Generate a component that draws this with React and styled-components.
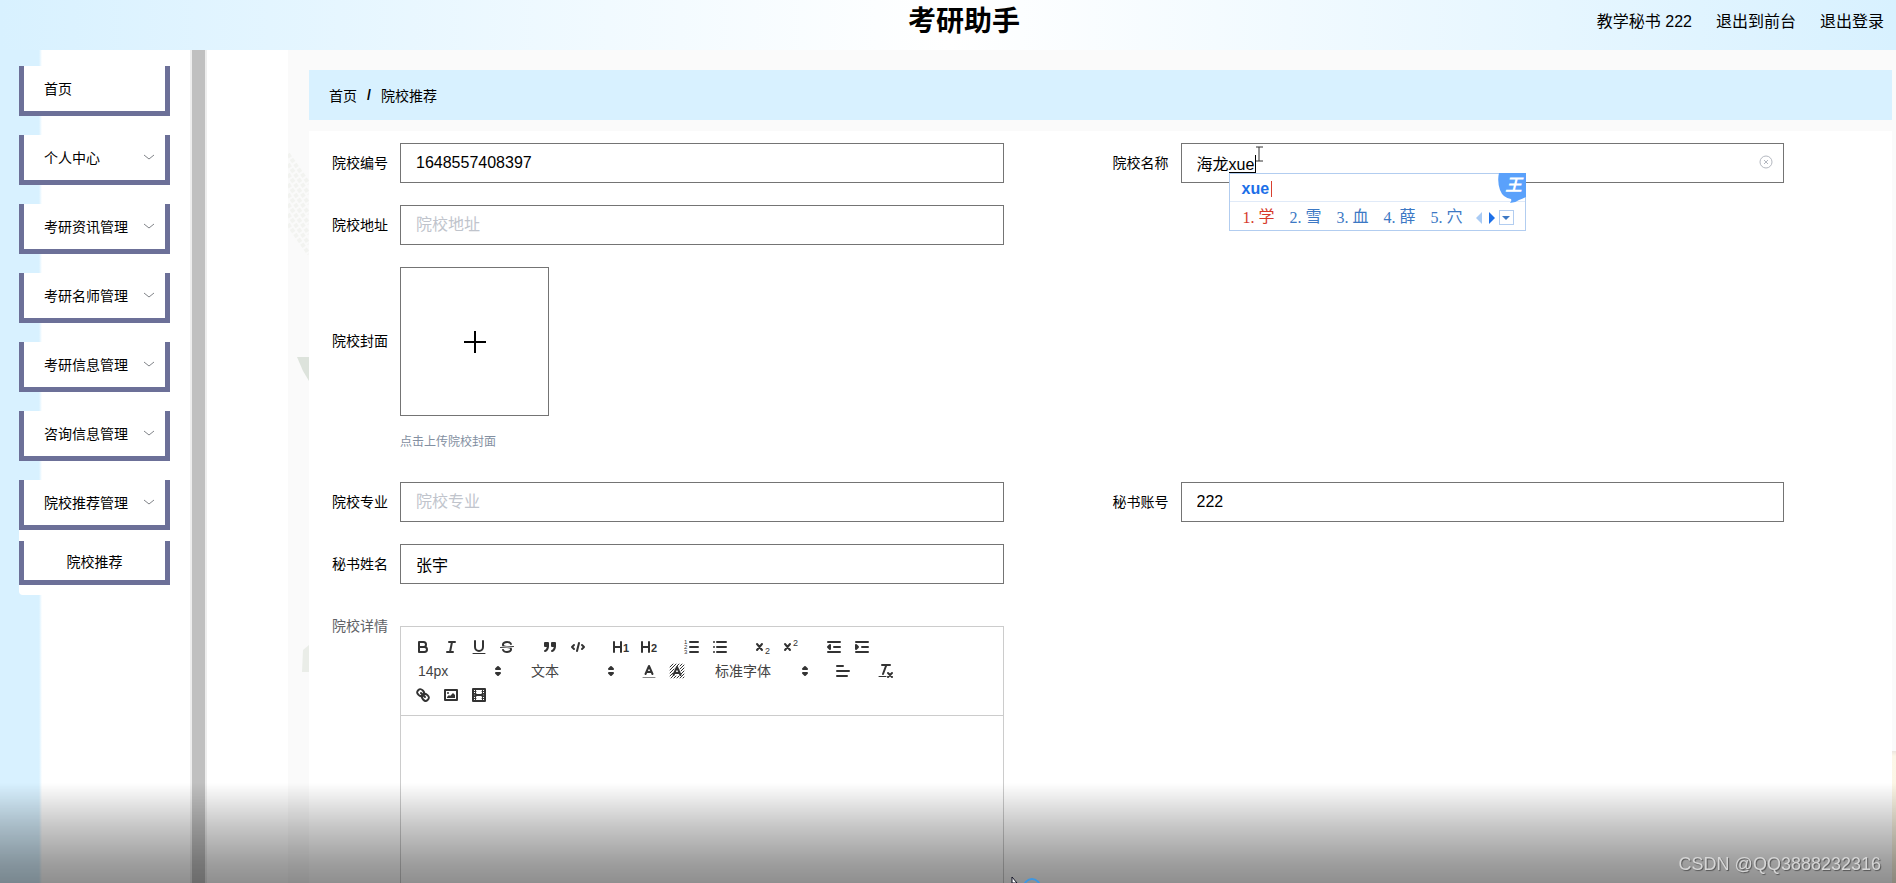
import React, { useState } from "react";
import styled, { createGlobalStyle } from "styled-components";

const GlobalStyle = createGlobalStyle`
  * {
    box-sizing: border-box;
  }

  body {
    margin: 0;
    overflow: hidden;
    background: #fff;
    color: #000;
    font-family: "Liberation Sans", "Noto Sans CJK SC", sans-serif;
    font-size: 14px;
  }

  button, input, select {
    margin: 0;
    font-family: inherit;
  }

  a {
    color: inherit;
    text-decoration: none;
  }
`;

const Page = styled.div`
  display: flex;
  flex-direction: column;
  height: 100vh;
  overflow: hidden;
`;

const Header = styled.header`
  display: grid;
  grid-template-columns: 1fr auto 1fr;
  flex: none;
  height: 50px;
  padding: 0 12px 6px 44px;
  align-items: center;
  background: linear-gradient(90deg, #d8f1ff, #fff 50%, #d8f1ff);
`;

const Title = styled.h1`
  grid-column: 2;
  margin: 0;
  font-size: 28px;
  line-height: 40px;
`;

const UserNav = styled.nav`
  display: flex;
  justify-content: flex-end;
  gap: 24px;
  font-size: 16px;
  line-height: 24px;
`;

const Body = styled.div`
  display: flex;
  flex: 1;
  min-height: 0;
`;

const Sidebar = styled.aside`
  flex: none;
  width: 190px;
  padding: 16px 20px 0 19px;
  background: linear-gradient(90deg, #d8f1ff 39px, #fff 42px);
`;

const Menu = styled.ul`
  display: flex;
  flex-direction: column;
  gap: 19px;
  margin: 0;
  padding: 0;
  list-style: none;
`;

const MenuItem = styled.button`
  display: flex;
  width: 100%;
  height: 50px;
  padding: 0 10px 2px 20px;
  align-items: center;
  justify-content: space-between;
  border: 5px solid #6c7098;
  border-top: 0;
  background: #fff;
  color: #000;
  font-size: 14px;
`;

const SubMenu = styled.div`
  padding: 11px 0 10px;
  border-radius: 0 0 4px 4px;
  background: #fff;
`;

const SubMenuItem = styled(MenuItem)`
  height: 44px;
  padding: 0;
  justify-content: center;
`;

const Divider = styled.div`
  flex: none;
  width: 17px;
  border: solid #eee;
  border-width: 0 2px;
  background: #c0c0c0;
`;

const Main = styled.main`
  display: grid;
  flex: 1;
  grid-template-columns: 21px 1fr 4px;
  min-width: 0;
  margin-left: 81px;
  background: #fafafa;
`;

const Gutter = styled.svg`
  display: block;
  width: 100%;
  height: 834px;
`;

const Edge = styled.div`
  background: linear-gradient(#fafafa 701px, #ebe6e0 701px, #fcf7e8 706px, #f5ecd2);
`;

const Content = styled.div`
  display: flex;
  flex-direction: column;
  min-width: 0;
  padding-top: 20px;
`;

const Breadcrumb = styled.nav`
  display: flex;
  flex: none;
  height: 50px;
  padding-left: 20px;
  gap: 10px;
  align-items: center;
  background: #d8f1ff;
`;

const Card = styled.form`
  display: flex;
  flex: 1;
  flex-direction: column;
  gap: 22px;
  margin-top: 11px;
  padding: 12px 11px 0;
  background: #fff;
`;

const Row = styled.div`
  display: grid;
  grid-template-columns: 1fr 1fr;
`;

const Field = styled.div`
  display: grid;
  grid-template-columns: 80px 1fr;
  padding-right: 97px;
`;

const Label = styled.label`
  height: ${(p) => (p.$tall ? "148px" : "40px")};
  padding-right: 12px;
  line-height: ${(p) => (p.$tall ? "148px" : "40px")};
  text-align: right;
  color: ${(p) => (p.$muted ? "#606266" : "#000")};
`;

const Control = styled.div`
  position: relative;
  min-width: 0;
`;

const TextInput = styled.input`
  display: block;
  width: 100%;
  height: 40px;
  padding: 0 15px;
  border: 1px solid #747474;
  border-radius: 0;
  outline: 0;
  background: #fff;
  color: #000;
  font-size: 16px;

  &::placeholder {
    color: #c0c4cc;
  }
`;

const ClearButton = styled.button`
  position: absolute;
  top: 11px;
  right: 10px;
  width: 16px;
  height: 16px;
  padding: 0;
  border: 0;
  background: none;

  svg {
    display: block;
  }
`;

const Composing = styled.span`
  position: absolute;
  top: 12px;
  left: 48px;
  width: 27px;
  height: 18px;
  border-right: 1px solid #000;
  border-bottom: 1px solid #000;
`;

const Pointer = styled.svg`
  position: absolute;
  top: 3px;
  left: 74px;
`;

const Ime = styled.div`
  position: absolute;
  z-index: 2;
  top: 30px;
  left: 48px;
  width: 297px;
  height: 58px;
  border: 1px solid #b2cdf0;
  background: #fff;
`;

const ImeText = styled.div`
  display: flex;
  height: 28px;
  padding: 2px 0 0 12px;
  align-items: center;
  border-bottom: 1px solid #e0eaf8;
  color: #1c6fe8;
  font-size: 16px;
  font-weight: bold;

  &::after {
    content: "";
    width: 1px;
    height: 16px;
    margin-left: 2px;
    background: #d8402f;
  }
`;

const ImeLogo = styled.svg`
  position: absolute;
  top: -1px;
  right: -1px;
`;

const Candidates = styled.div`
  display: flex;
  height: 29px;
  padding: 2px 0 0 13px;
  align-items: center;
`;

const Candidate = styled.button`
  display: flex;
  flex: none;
  width: ${(p) => (p.$last ? "42px" : "47px")};
  padding: 0;
  border: 0;
  background: none;
  color: ${(p) => (p.$active ? "#d63a2a" : "#3c78c4")};
  font-family: "Liberation Mono", "Noto Sans CJK SC", monospace;
  font-size: 16px;
  line-height: 24px;

  span {
    width: 16px;
    font-family: "Liberation Serif", serif;
    text-align: left;
  }
`;

const Pager = styled.button`
  width: ${(p) => (p.$boxed ? "15px" : "13px")};
  height: 15px;
  padding: 0;
  border: ${(p) => (p.$boxed ? "1px solid #b2cdf0" : "0")};
  background: none;

  svg {
    display: block;
    margin: 0 auto;
  }
`;

const Upload = styled.button`
  display: flex;
  width: 149px;
  height: 149px;
  padding: 0;
  align-items: center;
  justify-content: center;
  border: 1px solid #747474;
  background: #fff;
`;

const Tip = styled.div`
  margin-top: 8px;
  color: #838fa1;
  font-size: 12px;
  line-height: 36px;
`;

const Editor = styled.div`
  height: 400px;
  margin-top: 20px;
  border: 1px solid #ccc;
`;

const Toolbar = styled.div`
  padding: 8px;
  border-bottom: 1px solid #ccc;
`;

const ToolLine = styled.div`
  display: flex;
  height: 24px;
  gap: 15px;
`;

const Group = styled.div`
  display: flex;
`;

const Tool = styled.button`
  width: 28px;
  height: 24px;
  padding: 3px 5px;
  border: 0;
  background: none;
  color: #333;

  svg {
    display: block;
  }
`;

const Picker = styled.div`
  display: grid;
  width: ${(p) => p.$width};
  align-items: center;

  select {
    grid-area: 1 / 1;
    width: 100%;
    height: 24px;
    padding: 0 18px 0 9px;
    appearance: none;
    border: 0;
    background: none;
    color: #444;
    font-size: 14px;
  }

  svg {
    grid-area: 1 / 1;
    justify-self: end;
    color: #333;
    pointer-events: none;
  }
`;

const Shade = styled.div`
  position: fixed;
  z-index: 5;
  right: 0;
  bottom: 0;
  left: 0;
  height: 100px;
  background: linear-gradient(
    rgba(0, 0, 0, 0),
    rgba(0, 0, 0, 0.13) 25%,
    rgba(0, 0, 0, 0.22) 43%,
    rgba(0, 0, 0, 0.38) 80%,
    rgba(0, 0, 0, 0.44)
  );
  pointer-events: none;
`;

const Watermark = styled.div`
  position: absolute;
  right: 15px;
  bottom: 7px;
  color: #d6d6d6;
  font-family: "Liberation Sans", sans-serif;
  font-size: 18px;
  line-height: 24px;
  text-shadow: 1px 1px 1px #555;
`;

const BusyPointer = styled.svg`
  position: absolute;
  bottom: 0;
  left: 1010px;
`;

const menus = [
  "首页",
  "个人中心",
  "考研资讯管理",
  "考研名师管理",
  "考研信息管理",
  "咨询信息管理",
  "院校推荐管理",
];

const words = ["学", "雪", "血", "薛", "穴"];

const icons = {
  bold: (
    <>
      <path d="M5,4H9.5a2.5,2.5,0,0,1,0,5H5Z" />
      <path d="M5,9h5.5a2.5,2.5,0,0,1,0,5H5Z" />
    </>
  ),
  italic: <path d="M7,4H13M5,14H11M8,14L10,4" />,
  underline: (
    <>
      <path d="M5,3V9a4,4,0,0,0,8,0V3" />
      <path d="M3,15.5H15" strokeWidth="1" />
    </>
  ),
  strike: (
    <>
      <path d="M15.5,8.5L2.5,9.5" strokeWidth="1" />
      <path
        d="M9.007,8C6.542,7.791,6,7.519,6,6.5,6,5.792,7.283,5,9,5c1.571,0,2.765.679,2.969,1.309a1,1,0,0,0,1.9-.617C13.356,4.106,11.354,3,9,3,6.2,3,4,4.538,4,6.5a3.2,3.2,0,0,0,.5,1.843Z"
        fill="currentColor"
        stroke="none"
      />
      <path
        d="M8.984,10C11.457,10.208,12,10.479,12,11.5c0,.708-1.283,1.5-3,1.5-1.571,0-2.765-.679-2.969-1.309a1,1,0,1,0-1.9.617C4.644,13.894,6.646,15,9,15c2.8,0,5-1.538,5-3.5a3.2,3.2,0,0,0-.5-1.843Z"
        fill="currentColor"
        stroke="none"
      />
    </>
  ),
  quote: (
    <g fill="currentColor">
      <rect x="4" y="5" width="3" height="3" />
      <rect x="11" y="5" width="3" height="3" />
      <path d="M7,8c0,4.031-3,5-3,5" />
      <path d="M14,8c0,4.031-3,5-3,5" />
    </g>
  ),
  code: <path d="M5,7L3,9L5,11M13,7L15,9L13,11M10,5L8,13" />,
  h1: (
    <>
      <path d="M2,4V14M9,4V14M2,9H9" />
      <text x="11" y="14" fontSize="11" fontWeight="bold" fill="currentColor" stroke="none">
        1
      </text>
    </>
  ),
  h2: (
    <>
      <path d="M2,4V14M9,4V14M2,9H9" />
      <text x="11" y="14" fontSize="11" fontWeight="bold" fill="currentColor" stroke="none">
        2
      </text>
    </>
  ),
  ordered: (
    <>
      <path d="M7,4H15M7,9H15M7,14H15" />
      <g fill="currentColor" stroke="none" fontSize="6">
        <text x="1" y="6">1</text>
        <text x="1" y="11">2</text>
        <text x="1" y="16">3</text>
      </g>
    </>
  ),
  bullet: <path d="M6,4H15M6,9H15M6,14H15M3,4V4M3,9V9M3,14V14" />,
  sub: (
    <>
      <path d="M3,6L8,12M8,6L3,12" />
      <text x="11" y="16" fontSize="9" fill="currentColor" stroke="none">2</text>
    </>
  ),
  sup: (
    <>
      <path d="M3,6L8,12M8,6L3,12" />
      <text x="11" y="8" fontSize="9" fill="currentColor" stroke="none">2</text>
    </>
  ),
  outdent: (
    <>
      <path d="M3,4H15M9,9H15M3,14H15" />
      <path d="M5,7V11L3,9Z" fill="currentColor" />
    </>
  ),
  indent: (
    <>
      <path d="M3,4H15M9,9H15M3,14H15" />
      <path d="M3,7V11L5,9Z" fill="currentColor" />
    </>
  ),
  arrows: (
    <g fill="currentColor">
      <path d="M7,11L9,13L11,11Z" />
      <path d="M7,7L9,5L11,7Z" />
    </g>
  ),
  color: (
    <>
      <path d="M5.5,12L9,4L12.5,12M6.4,10H11.6" />
      <path d="M3,15.5H15" strokeWidth="1" stroke="#888" />
    </>
  ),
  background: (
    <>
      <path
        d="M2,5L5,2M2,8L8,2M2,11L6,7M9,4L11,2M2,14L5,11M12,4L14,2M3,16L5,14M12,7L16,3M6,16L8,14M13,9L16,6M9,16L11,14M13,12L16,9M12,16L16,12M15,16L16,15"
        strokeWidth="1"
      />
      <path d="M5.5,13L9,5L12.5,13M6.4,11H11.6" />
    </>
  ),
  align: <path d="M3,4H9M3,9H15M3,14H13" />,
  clean: (
    <>
      <path d="M5,3H13M6,12L9.35,3M11,11L15,15M15,11L11,15" />
      <path d="M2,14.5H9" strokeWidth="1" />
    </>
  ),
  link: (
    <>
      <path d="M7,7L11,11" />
      <path d="M8.9,4.577a3.476,3.476,0,0,1,.36,4.679A3.476,3.476,0,0,1,4.577,8.9C3.185,7.5,2.035,6.4,4.217,4.217S7.5,3.185,8.9,4.577Z" />
      <path d="M13.423,9.1a3.476,3.476,0,0,0-4.679-.36,3.476,3.476,0,0,0,.36,4.679c1.392,1.392,2.5,2.542,4.679.36S14.815,10.5,13.423,9.1Z" />
    </>
  ),
  image: (
    <>
      <rect x="3" y="4" width="12" height="10" />
      <g fill="currentColor" stroke="none">
        <circle cx="6" cy="7" r="1" />
        <path d="M5,12V11L7,9L8,10L11,7L13,9V12Z" />
      </g>
    </>
  ),
  video: (
    <>
      <rect x="3" y="3" width="12" height="12" />
      <path
        d="M5.5,3V15M12.5,3V15M3,5.5H6M3,7.5H6M3,10.5H6M3,12.5H6M12,5.5H15M12,7.5H15M12,10.5H15M12,12.5H15"
        strokeWidth="1"
      />
      <path d="M5,9H13" />
    </>
  ),
};

function Icon({ name }) {
  return (
    <svg
      width="18"
      height="18"
      viewBox="0 0 18 18"
      fill="none"
      stroke="currentColor"
      strokeWidth="2"
      strokeLinecap="round"
      strokeLinejoin="round"
    >
      {icons[name]}
    </svg>
  );
}

function Tools({ names }) {
  return (
    <Group>
      {names.map((name) => (
        <Tool type="button" key={name} aria-label={name}>
          <Icon name={name} />
        </Tool>
      ))}
    </Group>
  );
}

function ToolPicker({ label, value, width }) {
  return (
    <Picker $width={width}>
      <select aria-label={label} defaultValue={value}>
        <option>{value}</option>
      </select>
      <Icon name="arrows" />
    </Picker>
  );
}

function TextField({ id, label, value = "", children }) {
  const [text, setText] = useState(value);
  return (
    <Field>
      <Label htmlFor={id}>{label}</Label>
      <Control>
        <TextInput
          id={id}
          value={text}
          placeholder={label}
          onChange={(e) => setText(e.target.value)}
        />
        {children}
      </Control>
    </Field>
  );
}

function ImePanel() {
  return (
    <Ime>
      <ImeText>xue</ImeText>
      <Candidates>
        {words.map((word, i) => (
          <Candidate
            type="button"
            key={word}
            $active={i === 0}
            $last={i === words.length - 1}
          >
            <span>{i + 1}.</span>
            {word}
          </Candidate>
        ))}
        <Pager type="button" aria-label="上一页">
          <svg width="6" height="12" viewBox="0 0 6 12">
            <path d="M6,0V12L0,6Z" fill="#a9cbf5" />
          </svg>
        </Pager>
        <Pager type="button" aria-label="下一页">
          <svg width="6" height="12" viewBox="0 0 6 12">
            <path d="M0,0V12L6,6Z" fill="#1c6fe8" />
          </svg>
        </Pager>
        <Pager type="button" aria-label="更多" $boxed>
          <svg width="8" height="4" viewBox="0 0 8 4">
            <path d="M0,0H8L4,4Z" fill="#3c78c4" />
          </svg>
        </Pager>
      </Candidates>
      <ImeLogo width="28" height="31" viewBox="0 0 28 31">
        <path
          d="M1,0H28V24Q24,26 21,27Q17,30 12,30Q14,28 13,26Q5,25 2,17Q-1,8 1,0Z"
          fill="#5aa1fb"
        />
        <text x="7" y="18" fontSize="17" fontWeight="bold" fontStyle="italic" fill="#fff">
          王
        </text>
      </ImeLogo>
    </Ime>
  );
}

function SideMenu() {
  return (
    <Sidebar>
      <Menu>
        {menus.map((name, i) => (
          <li key={name}>
            <MenuItem type="button">
              {name}
              {i > 0 && (
                <svg width="12" height="12" viewBox="0 0 12 12" fill="none" stroke="#808388">
                  <path d="M1,4L6,8L11,4" />
                </svg>
              )}
            </MenuItem>
            {i === menus.length - 1 && (
              <SubMenu>
                <SubMenuItem type="button">院校推荐</SubMenuItem>
              </SubMenu>
            )}
          </li>
        ))}
      </Menu>
    </Sidebar>
  );
}

function App() {
  return (
    <Page>
      <GlobalStyle />
      <Header>
        <Title>考研助手</Title>
        <UserNav>
          <span>教学秘书 222</span>
          <a href="#front">退出到前台</a>
          <a href="#logout">退出登录</a>
        </UserNav>
      </Header>
      <Body>
        <SideMenu />
        <Divider />
        <Main>
          {/* faded edge of the background picture */}
          <Gutter viewBox="0 0 21 834" preserveAspectRatio="none">
            <path
              d="M0,104L21,134M0,114L21,144M0,124L21,154M0,134L21,164M0,144L21,174M0,154L21,184M0,164L21,194M0,174L21,204"
              stroke="#f2f3f0"
              strokeWidth="4"
              strokeDasharray="4 2"
            />
            <path d="M9,307H21V331L15,321Z" fill="#dde3dc" />
            <path d="M15,600L21,595V622H14Z" fill="#eaede8" />
          </Gutter>
          <Content>
            <Breadcrumb>
              <a href="#home">首页</a>
              <b>/</b>
              <span>院校推荐</span>
            </Breadcrumb>
            <Card>
              <Row>
                <TextField id="code" label="院校编号" value="1648557408397" />
                <TextField id="name" label="院校名称" value="海龙xue">
                  <Composing />
                  <Pointer width="9" height="17" viewBox="0 0 9 17">
                    <path d="M1,1H8M4,1V15M1,15H8" fill="none" stroke="#333" />
                  </Pointer>
                  <ClearButton type="button" aria-label="清空">
                    <svg width="16" height="16" viewBox="0 0 16 16" fill="none" stroke="#b4b8c0">
                      <circle cx="8" cy="8" r="6" />
                      <path d="M6,6L10,10M10,6L6,10" />
                    </svg>
                  </ClearButton>
                  <ImePanel />
                </TextField>
              </Row>
              <Row>
                <TextField id="address" label="院校地址" />
              </Row>
              <Row>
                <Field>
                  <Label htmlFor="cover" $tall>院校封面</Label>
                  <Control>
                    <Upload id="cover" type="button">
                      <svg width="24" height="24" viewBox="0 0 24 24" stroke="#000" strokeWidth="2">
                        <path d="M12,1V23M1,12H23" />
                      </svg>
                    </Upload>
                    <Tip>点击上传院校封面</Tip>
                  </Control>
                </Field>
              </Row>
              <Row>
                <TextField id="major" label="院校专业" />
                <TextField id="account" label="秘书账号" value="222" />
              </Row>
              <Row>
                <TextField id="secretary" label="秘书姓名" value="张宇" />
              </Row>
              <Row>
                <Field>
                  <Label as="span" id="detail" $muted>院校详情</Label>
                  <Control>
                    <Editor>
                      <Toolbar>
                        <ToolLine>
                          <Tools names={["bold", "italic", "underline", "strike"]} />
                          <Tools names={["quote", "code"]} />
                          <Tools names={["h1", "h2"]} />
                          <Tools names={["ordered", "bullet"]} />
                          <Tools names={["sub", "sup"]} />
                          <Tools names={["outdent", "indent"]} />
                        </ToolLine>
                        <ToolLine>
                          <ToolPicker label="字号" value="14px" width="98px" />
                          <ToolPicker label="标题" value="文本" width="98px" />
                          <Tools names={["color", "background"]} />
                          <ToolPicker label="字体" value="标准字体" width="108px" />
                          <Tools names={["align"]} />
                          <Tools names={["clean"]} />
                        </ToolLine>
                        <ToolLine>
                          <Tools names={["link", "image", "video"]} />
                        </ToolLine>
                      </Toolbar>
                      <div
                        contentEditable
                        suppressContentEditableWarning
                        role="textbox"
                        aria-labelledby="detail"
                      />
                    </Editor>
                  </Control>
                </Field>
              </Row>
            </Card>
          </Content>
          <Edge />
        </Main>
      </Body>
      <Shade>
        <BusyPointer width="34" height="6" viewBox="0 0 34 6">
          <path d="M2,0L7,6H2Z" fill="#fff" stroke="#112" />
          <circle cx="22" cy="10" r="8" fill="none" stroke="#3f96e0" strokeWidth="2" />
        </BusyPointer>
        <Watermark>CSDN @QQ3888232316</Watermark>
      </Shade>
    </Page>
  );
}

export default App;
